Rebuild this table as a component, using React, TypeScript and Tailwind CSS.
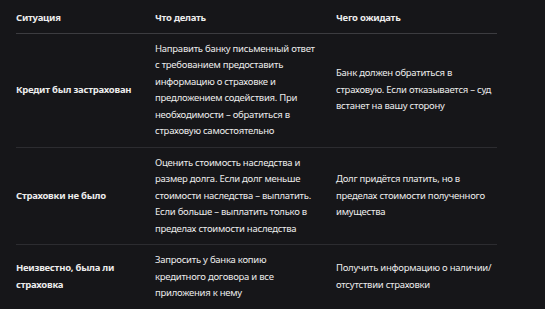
import React from 'react';

const rows = [
  {
    situation: 'Кредит был застрахован',
    todo: 'Направить банку письменный ответ с требованием предоставить информацию о страховке и предложением содействия. При необходимости – обратиться в страховую самостоятельно',
    expect: 'Банк должен обратиться в страховую. Если отказывается – суд встанет на вашу сторону',
  },
  {
    situation: 'Страховки не было',
    todo: 'Оценить стоимость наследства и размер долга. Если долг меньше стоимости наследства – выплатить. Если больше – выплатить только в пределах стоимости наследства',
    expect: 'Долг придётся платить, но в пределах стоимости полученного имущества',
  },
  {
    situation: 'Неизвестно, была ли страховка',
    todo: 'Запросить у банка копию кредитного договора и все приложения к нему',
    expect: 'Получить информацию о наличии/ отсутствии страховки',
  },
];

const App = () => {
  return (
    <div
      className="min-h-[309px] w-[545px] bg-[#161619] pl-4 text-[9.5px] leading-[16.5px] tracking-[-0.25px] text-[#ececec]"
      style={{ fontFamily: '"Noto Sans", sans-serif' }}
    >
      <div className="w-[481px]">
        {/* header */}
        <div className="grid grid-cols-[139px_181px_161px] border-b border-[#3c3c40] pb-[6px] pt-[10px] font-bold">
          <div>Ситуация</div>
          <div>Что делать</div>
          <div>Чего ожидать</div>
        </div>

        {rows.map((row, i) => (
          <div
            key={row.situation}
            className={`grid grid-cols-[139px_181px_161px] items-center py-[7px] ${
              i < rows.length - 1 ? 'border-b border-[#2c2c30]' : ''
            }`}
          >
            <div className="pr-4 font-bold">{row.situation}</div>
            <div className="pr-5">{row.todo}</div>
            <div>{row.expect}</div>
          </div>
        ))}
      </div>
    </div>
  );
};

export default App;
